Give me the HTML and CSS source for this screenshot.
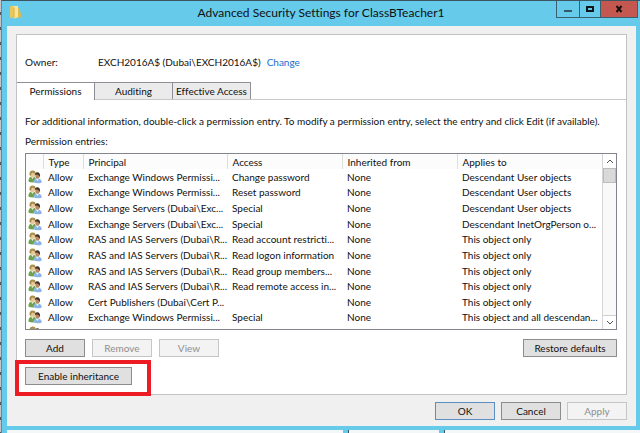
FILE: index.html
```html
<!DOCTYPE html>
<html lang="en">
<head>
  <meta charset="UTF-8" />
  <meta name="viewport" content="width=device-width, initial-scale=1.0"/>
  <title>Advanced Security Settings for ClassBTeacher1</title>
  <link rel="stylesheet" href="styles.css">
</head>
<body>
  <!-- shared icon -->
  <svg class="sprite" aria-hidden="true">
    <symbol id="users" viewBox="0 0 14 14">
      <path d="M.5 10.500 Q.8 6.500 4.500 6.500 Q7.500 6.500 7.800 9.500 V12 Q4 13 .7 11.800z" fill="#6fa04c"/>
      <path d="M3 6.800 L4.500 9 L6 6.800z" fill="#eef3df"/>
      <ellipse cx="4.600" cy="4.200" rx="2.600" ry="3" fill="#e8c99a"/>
      <path d="M1.500 5 Q1 .7 4.600 .5 Q8 .6 7.400 3.600 Q5 3.400 4.200 2.500 Q3 4 3 5.800z" fill="#a98f4e"/>
      <path d="M5.400 12.300 Q5.300 8.800 9 8.600 Q13.600 8.400 13.800 12.400 Q9.500 14.300 5.400 12.300z" fill="#8ab4e4"/>
      <path d="M8 8.800 L9.400 11 L10.900 8.800z" fill="#f3f7fc"/>
      <ellipse cx="9.500" cy="6" rx="2.200" ry="2.800" fill="#b98760"/>
      <path d="M7 5 Q6.800 2.300 9.300 2.200 Q12.500 2.200 12 7 Q11 5 9.400 4.500 Q8 4.200 7 5z" fill="#3f3129"/>
    </symbol>
  </svg>

  <div class="window">
    <header class="title-bar">
      <svg class="folder" viewBox="0 0 12 14" aria-hidden="true">
        <path d="M1 1.500 L5 .5 V12 L1 13z" fill="#e9c75d"/>
        <path d="M4.500 1 H9 V12.500 L5 13.500 L4.500 13z" fill="#f8e596"/>
        <path d="M9 3 H10.500 V7 L12 8 V12.500 H9z" fill="#dfb94e"/>
        <path d="M5 2.500 V12.500" stroke="#d5a93a" fill="none"/>
      </svg>
      <h1>Advanced Security Settings for ClassBTeacher1</h1>
      <div class="window-buttons">
        <button type="button" class="min" aria-label="Minimize"><svg width="8" height="8" viewBox="0 0 8 8"><path d="M0 6h8" stroke="#31596b" stroke-width="2"/></svg></button>
        <button type="button" class="max" aria-label="Maximize"><svg width="8" height="8" viewBox="0 0 8 8"><path d="M1 2h6v4h-6z" fill="none" stroke="#101518" stroke-width="2"/></svg></button>
        <button type="button" class="close" aria-label="Close"><svg width="8" height="8" viewBox="0 0 8 8"><path d="M1.500 1l5 6M6.500 1l-5 6" stroke="#1b1010" stroke-width="2"/></svg></button>
      </div>
    </header>

    <main class="content">
      <div class="panel">
        <div class="owner">
          <span class="owner-label">Owner:</span>
          <span class="owner-name">EXCH2016A$ (Dubai\EXCH2016A$)</span>
          <a href="#">Change</a>
        </div>

        <div class="tabs" role="tablist">
          <button type="button" role="tab" class="tab active" aria-selected="true">Permissions</button>
          <button type="button" role="tab" class="tab">Auditing</button>
          <button type="button" role="tab" class="tab">Effective Access</button>
        </div>

        <div class="tab-page">
          <p class="hint">For additional information, double-click a permission entry. To modify a permission entry, select the entry and click Edit (if available).</p>
          <p class="list-label" id="entriesLabel">Permission entries:</p>

          <div class="list">
            <div class="list-view">
              <table aria-labelledby="entriesLabel">
                <colgroup>
                  <col class="col-icon"><col class="col-type"><col class="col-principal"><col class="col-access"><col class="col-inherited"><col>
                </colgroup>
                <thead>
                  <tr><th></th><th>Type</th><th>Principal</th><th>Access</th><th>Inherited from</th><th>Applies to</th></tr>
                </thead>
                <tbody>
                  <tr><td><svg class="users"><use href="#users"/></svg></td><td>Allow</td><td>Exchange Windows Permissi...</td><td>Change password</td><td>None</td><td>Descendant User objects</td></tr>
                  <tr><td><svg class="users"><use href="#users"/></svg></td><td>Allow</td><td>Exchange Windows Permissi...</td><td>Reset password</td><td>None</td><td>Descendant User objects</td></tr>
                  <tr><td><svg class="users"><use href="#users"/></svg></td><td>Allow</td><td>Exchange Servers (Dubai\Exc...</td><td>Special</td><td>None</td><td>Descendant User objects</td></tr>
                  <tr><td><svg class="users"><use href="#users"/></svg></td><td>Allow</td><td>Exchange Servers (Dubai\Exc...</td><td>Special</td><td>None</td><td>Descendant InetOrgPerson o...</td></tr>
                  <tr><td><svg class="users"><use href="#users"/></svg></td><td>Allow</td><td>RAS and IAS Servers (Dubai\R...</td><td>Read account restricti...</td><td>None</td><td>This object only</td></tr>
                  <tr><td><svg class="users"><use href="#users"/></svg></td><td>Allow</td><td>RAS and IAS Servers (Dubai\R...</td><td>Read logon information</td><td>None</td><td>This object only</td></tr>
                  <tr><td><svg class="users"><use href="#users"/></svg></td><td>Allow</td><td>RAS and IAS Servers (Dubai\R...</td><td>Read group members...</td><td>None</td><td>This object only</td></tr>
                  <tr><td><svg class="users"><use href="#users"/></svg></td><td>Allow</td><td>RAS and IAS Servers (Dubai\R...</td><td>Read remote access in...</td><td>None</td><td>This object only</td></tr>
                  <tr><td><svg class="users"><use href="#users"/></svg></td><td>Allow</td><td>Cert Publishers (Dubai\Cert P...</td><td></td><td>None</td><td>This object only</td></tr>
                  <tr><td><svg class="users"><use href="#users"/></svg></td><td>Allow</td><td>Exchange Windows Permissi...</td><td>Special</td><td>None</td><td>This object and all descendan...</td></tr>
                  <tr><td><svg class="users"><use href="#users"/></svg></td><td></td><td></td><td></td><td></td><td></td></tr>
                </tbody>
              </table>
            </div>
            <div class="scrollbar">
              <button type="button" class="scroll-up" aria-label="Scroll up"><svg width="8" height="6" viewBox="0 0 8 6"><path d="M1 5l3-3 3 3" fill="none" stroke="#505050"/></svg></button>
              <div class="thumb"></div>
              <button type="button" class="scroll-down" aria-label="Scroll down"><svg width="8" height="6" viewBox="0 0 8 6"><path d="M1 1l3 3 3-3" fill="none" stroke="#505050"/></svg></button>
            </div>
          </div>

          <div class="actions">
            <button type="button" class="btn">Add</button>
            <button type="button" class="btn" disabled>Remove</button>
            <button type="button" class="btn" disabled>View</button>
            <button type="button" class="btn restore">Restore defaults</button>
          </div>
          <div class="inheritance">
            <button type="button" class="btn enable">Enable inheritance</button>
            <div class="highlight"></div>
          </div>
        </div>
      </div>

      <footer class="dialog-buttons">
        <button type="button" class="btn default">OK</button>
        <button type="button" class="btn">Cancel</button>
        <button type="button" class="btn" disabled>Apply</button>
      </footer>
    </main>

    <!-- windows behind the dialog -->
    <div class="behind">
      <span class="pane pane-wide"></span>
      <span class="pane pane-small"></span>
      <span class="pane pane-rest"></span>
    </div>
  </div>
</body>
</html>
```
FILE: styles.css
```css
* {
  box-sizing: border-box;
}

body {
  margin: 0;
  height: 100vh;
  padding-left: 1px;
  background: repeating-linear-gradient(#c4c4c8 0, #c4c4c8 12px, #55555e 12px, #55555e 15px);
  font-family: Lato, "Open Sans", sans-serif;
  font-size: 10px;
  font-variant-ligatures: none;
  line-height: 14px;
  color: #101010;
}

button {
  margin: 0;
  padding: 0;
  font: inherit;
  font-variant-ligatures: none;
  color: inherit;
}

h1,
p {
  margin: 0;
  font-weight: normal;
}

.sprite {
  position: absolute;
  width: 0;
  height: 0;
}

.window {
  display: flex;
  flex-direction: column;
  height: 100%;
  background: #66caea;
  border-top: 1px solid #3d5561;
  border-left: 1px solid #4b93ad;
}

/* title bar */
.title-bar {
  display: grid;
  grid-template-columns: 84px 1fr 84px;
  height: 25px;
}

.folder {
  width: 12px;
  height: 14px;
  margin: 4px 0 0 7px;
}

.title-bar h1 {
  font-size: 12px;
  line-height: 24px;
  text-align: center;
}

.window-buttons {
  display: flex;
  height: 17px;
  margin-right: 2px;
  border: 1px solid #39606f;
  border-top: none;
}

.window-buttons button {
  display: flex;
  align-items: center;
  justify-content: center;
  width: 23px;
  background: none;
  border: none;
  border-right: 1px solid #39606f;
}

.window-buttons .max {
  width: 21px;
}

.window-buttons .close {
  flex: 1;
  background: #c45850;
  border-right: none;
}

/* dialog body */
.content {
  flex: 1;
  display: flex;
  flex-direction: column;
  min-height: 0;
  margin: 0 4px 0 5px;
  padding: 8px 9px 6px;
  background: #f0f0f0;
}

.panel {
  flex: 1;
  display: flex;
  flex-direction: column;
  min-height: 0;
  background: #fff;
  border: 1px solid #c2c2c2;
}

.owner {
  display: flex;
  align-items: center;
  height: 47px;
  padding: 6px 8px 0;
}

.owner-label {
  width: 73px;
}

.owner a {
  margin-left: 6px;
  color: #1a6ed0;
  text-decoration: none;
}

.tabs {
  display: flex;
  height: 18px;
  border-bottom: 1px solid #c8c8c8;
}

.tab {
  width: 78px;
  height: 17px;
  background: #ebebeb;
  border: 1px solid #8e8f96;
  border-left: none;
  border-bottom: none;
  white-space: nowrap;
}

.tab.active {
  height: 18px;
  padding-bottom: 2px;
  background: #fff;
}

.tab-page {
  flex: 1;
  display: flex;
  flex-direction: column;
  min-height: 0;
  padding: 14px 9px 9px 8px;
}

.hint {
  white-space: nowrap;
}

.list-label {
  margin-top: 6px;
}

/* permission entries */
.list {
  flex: 1;
  display: flex;
  min-height: 0;
  margin-top: 5px;
  border: 1px solid #82858c;
}

.list-view {
  flex: 1;
  overflow: hidden;
}

table {
  width: 100%;
  height: 187px;
  table-layout: fixed;
  border-collapse: collapse;
}

.col-icon {
  width: 17px;
}

.col-type {
  width: 40px;
}

.col-principal {
  width: 144px;
}

.col-access,
.col-inherited {
  width: 115px;
}

thead tr {
  height: 15px;
}

th,
td {
  padding: 0 0 0 5px;
  font-weight: normal;
  text-align: left;
  white-space: nowrap;
}

th {
  background: #fcfcfc;
  border-right: 1px solid #dedede;
}

th:last-child {
  border-right: none;
}

td:first-child {
  padding-left: 2px;
}

.users {
  display: block;
  width: 14px;
  height: 14px;
}

.scrollbar {
  display: flex;
  flex-direction: column;
  width: 14px;
  background: #f9f9f9;
  border-left: 1px solid #d5d5d5;
}

.scrollbar button {
  display: flex;
  align-items: center;
  justify-content: center;
  height: 14px;
  background: #fff;
  border: none;
}

.thumb {
  height: 15px;
  background: #d9d9d9;
  border: 1px solid #bcbcbc;
}

.scrollbar .scroll-down {
  margin-top: auto;
  border-top: 1px solid #d0d0d0;
}

/* buttons */
.btn {
  width: 60px;
  height: 18px;
  background: #e0e0e0;
  border: 1px solid #8c8c8c;
  line-height: 14px;
}

.btn:disabled {
  background: #f3f3f3;
  border-color: #c6c6c6;
  color: #8e8e8e;
}

.btn.default {
  border-color: #5a8fc0;
}

.actions {
  display: flex;
  gap: 7px;
  margin-top: 9px;
}

.btn.restore {
  width: 94px;
  margin-left: auto;
}

.inheritance {
  position: relative;
  margin-top: 10px;
}

.btn.enable {
  display: block;
  width: 107px;
}

/* red frame laid over the button and the panel edge */
.highlight {
  position: absolute;
  top: -7px;
  left: -10px;
  width: 136px;
  height: 36px;
  border: 4px solid #ed1c24;
}

.dialog-buttons {
  display: flex;
  justify-content: flex-end;
  gap: 6px;
  margin-top: 7px;
}

.behind {
  display: flex;
  height: 7px;
  padding: 4px 0 0 5px;
}

.pane {
  background: #f4f7f8;
}

.pane-wide {
  flex: 0 1 336px;
}

.pane-small {
  flex: 0 1 91px;
  margin: 0 5px;
  border-left: 1px solid #3d5561;
}

.pane-rest {
  flex: 1;
  border-left: 1px solid #3d5561;
}
```
